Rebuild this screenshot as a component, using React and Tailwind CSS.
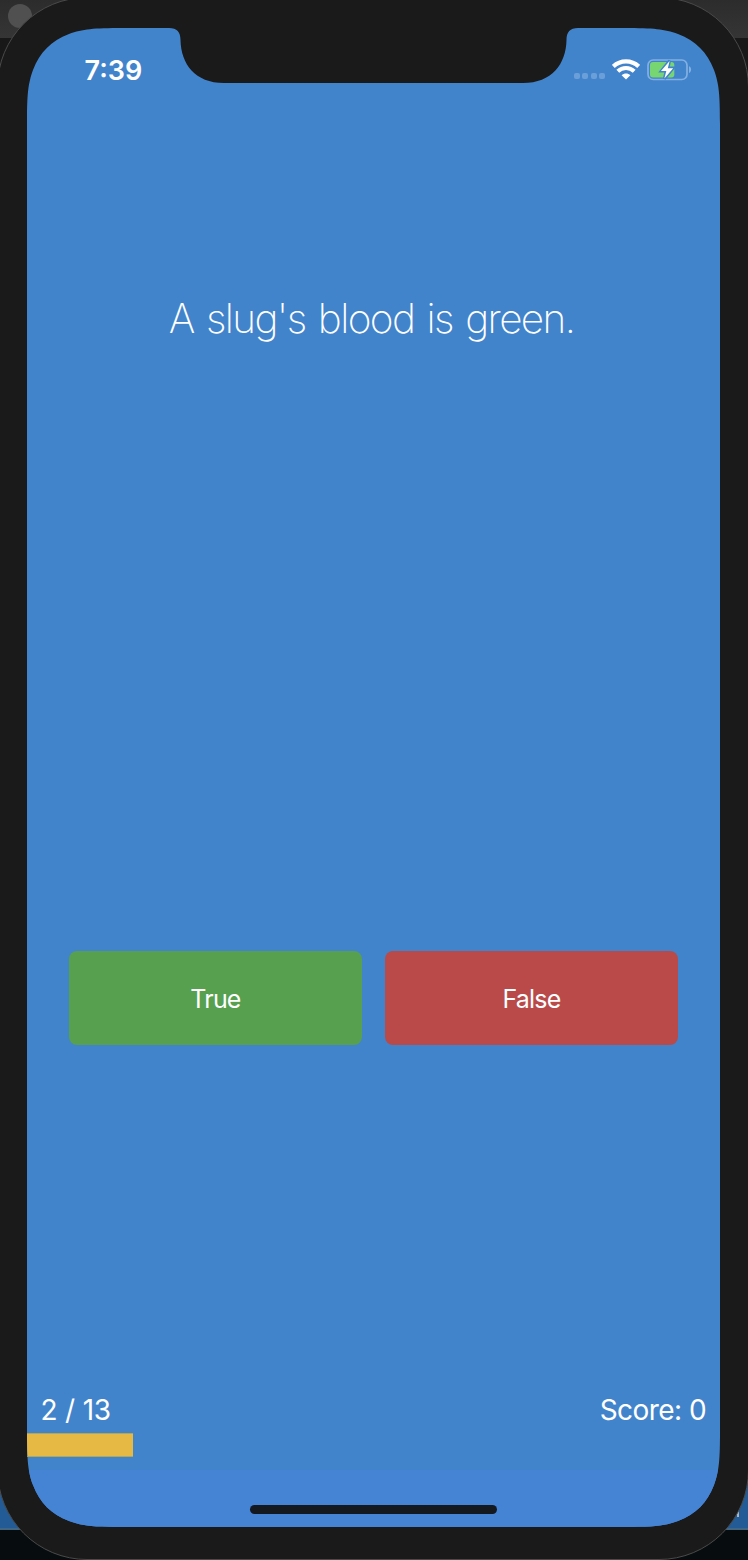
const question = { text: "A slug's blood is green.", number: 2, total: 13, score: 0 };

function Desktop() {
  return (
    <div className="col-start-1 row-start-1 flex h-[1560px] flex-col bg-[#181818]">
      <div className="h-[38px] bg-linear-to-b from-[#2c2c2c] to-[#353535] pt-1 pl-2">
        <div className="size-6 rounded-full bg-[#505050]" />
      </div>
      <div className="grow" />
      <div className="flex h-[90px] items-end justify-end border-b-2 border-[#416684] bg-[#235b96] pr-[9px] pb-[11px]">
        <div className="h-2 w-0.5 bg-[#a9b4bd]" />
      </div>
      <div className="h-[30px] bg-[#070d0f]" />
    </div>
  );
}

function WifiIcon() {
  return (
    <svg className="h-[21px] w-7" viewBox="0 0 28 21" fill="none" stroke="#fff">
      <path d="M1.3 7.4C8.4.6 19.6.6 26.7 7.4" strokeWidth="4.2" />
      <path d="M5.8 12.3C10.4 7.9 17.6 7.9 22.2 12.3" strokeWidth="4" />
      <path d="M9.6 16.2C12.2 13.9 15.8 13.9 18.4 16.2L14 20.6Z" fill="#fff" stroke="none" />
    </svg>
  );
}

function BatteryIcon() {
  return (
    <svg className="h-[22px] w-[45px]" viewBox="0 0 45 22" fill="none">
      <rect x="1" y="1" width="39" height="19.5" rx="5.2" stroke="#83b0e2" strokeWidth="1.7" />
      <path d="M42 7.3C44.8 8.3 44.8 13 42 14Z" fill="#83b0e2" />
      <rect x="3" y="3" width="24.3" height="15.5" rx="3" fill="#77d572" />
      <path d="M22.6 1.6L14.3 12H19.1L17.4 19.8L26.2 9H21Z" fill="#4284cb" stroke="#4284cb" strokeWidth="3" />
      <path d="M22.6 2L14 12H19.3L17.4 19.6L26.2 9.2H20.8Z" fill="#fff" />
    </svg>
  );
}

function StatusBar() {
  return (
    <div className="flex h-[55px] items-start justify-between pt-[30px] pr-7 pl-[57.5px] text-white">
      <div className="text-[27px] leading-[25px] font-semibold">7:39</div>
      <div className="flex items-start pt-px">
        <div className="mt-[14px] mr-[7px] flex gap-[2.4px]">
          {[0, 1, 2, 3].map((dot) => (
            <div key={dot} className="size-[6px] rounded-[2px] bg-[#6b9fd9]" />
          ))}
        </div>
        <div className="mr-[7px]"><WifiIcon /></div>
        <BatteryIcon />
      </div>
    </div>
  );
}

export default function App() {
  return (
    <div className="grid h-[1560px] w-[748px] grid-cols-[748px] overflow-hidden font-['Inter',sans-serif]">
      <Desktop />
      <div className="z-10 col-start-1 row-start-1 -mt-[3px] -ml-[3px] h-[1563px] w-[752px] rounded-[90px] border border-[#4a4a4a] bg-[#1a1a1a] pt-[30px] pl-[29px]">
        <div className="flex h-[1499px] w-[693px] flex-col bg-[#4284cb] [clip-path:path('M0_96C0_66_1_56_6_42C13_24_24_13_42_6C56_1_66_0_96_0H142C150_0_153.5_4_153.5_12C154_36_168_55_197_55H496C525_55_539_36_539.5_12C539.5_4_543_0_551_0H597C627_0_637_1_651_6C669_13_680_24_687_42C692_56_693_66_693_96V1403C693_1433_692_1443_687_1457C680_1475_669_1486_651_1493C637_1498_627_1499_597_1499H96C66_1499_56_1498_42_1493C24_1486_13_1475_6_1457C1_1443_0_1433_0_1403Z')]">
          <StatusBar />
          <div className="mt-[210px] flex h-[53px] items-center justify-center pr-1 text-[40.5px] font-[150] tracking-[-1.6px] [word-spacing:2.5px] whitespace-nowrap text-white">
            {question.text}
          </div>
          <div className="mt-[605px] grid grid-cols-2 gap-[23px] px-[42px] text-[25px] tracking-[-0.8px] text-white">
            <button className="h-[94px] rounded-lg bg-[#56a04f] pt-[3px]">True</button>
            <button className="h-[94px] rounded-lg bg-[#b94a49] pt-[3px]">False</button>
          </div>
          <div className="mt-[344px] flex h-11 items-start justify-between px-[14px] pt-[4px] text-[28px] leading-[34px] text-white">
            <div className="-ml-[0.5px] tracking-[-0.2px]">{question.number} / {question.total}</div>
            <div className="tracking-[-0.55px]">Score: {question.score}</div>
          </div>
          <div className="h-[24px] w-[106px] border-y border-[#b5a653] bg-[#e5b944]" />
          <div className="mt-[13px] flex grow items-end justify-center bg-[#4583d5] pb-[13px]">
            <div className="h-[9px] w-[247px] rounded-full bg-[#14191f]" />
          </div>
        </div>
      </div>
    </div>
  );
}
